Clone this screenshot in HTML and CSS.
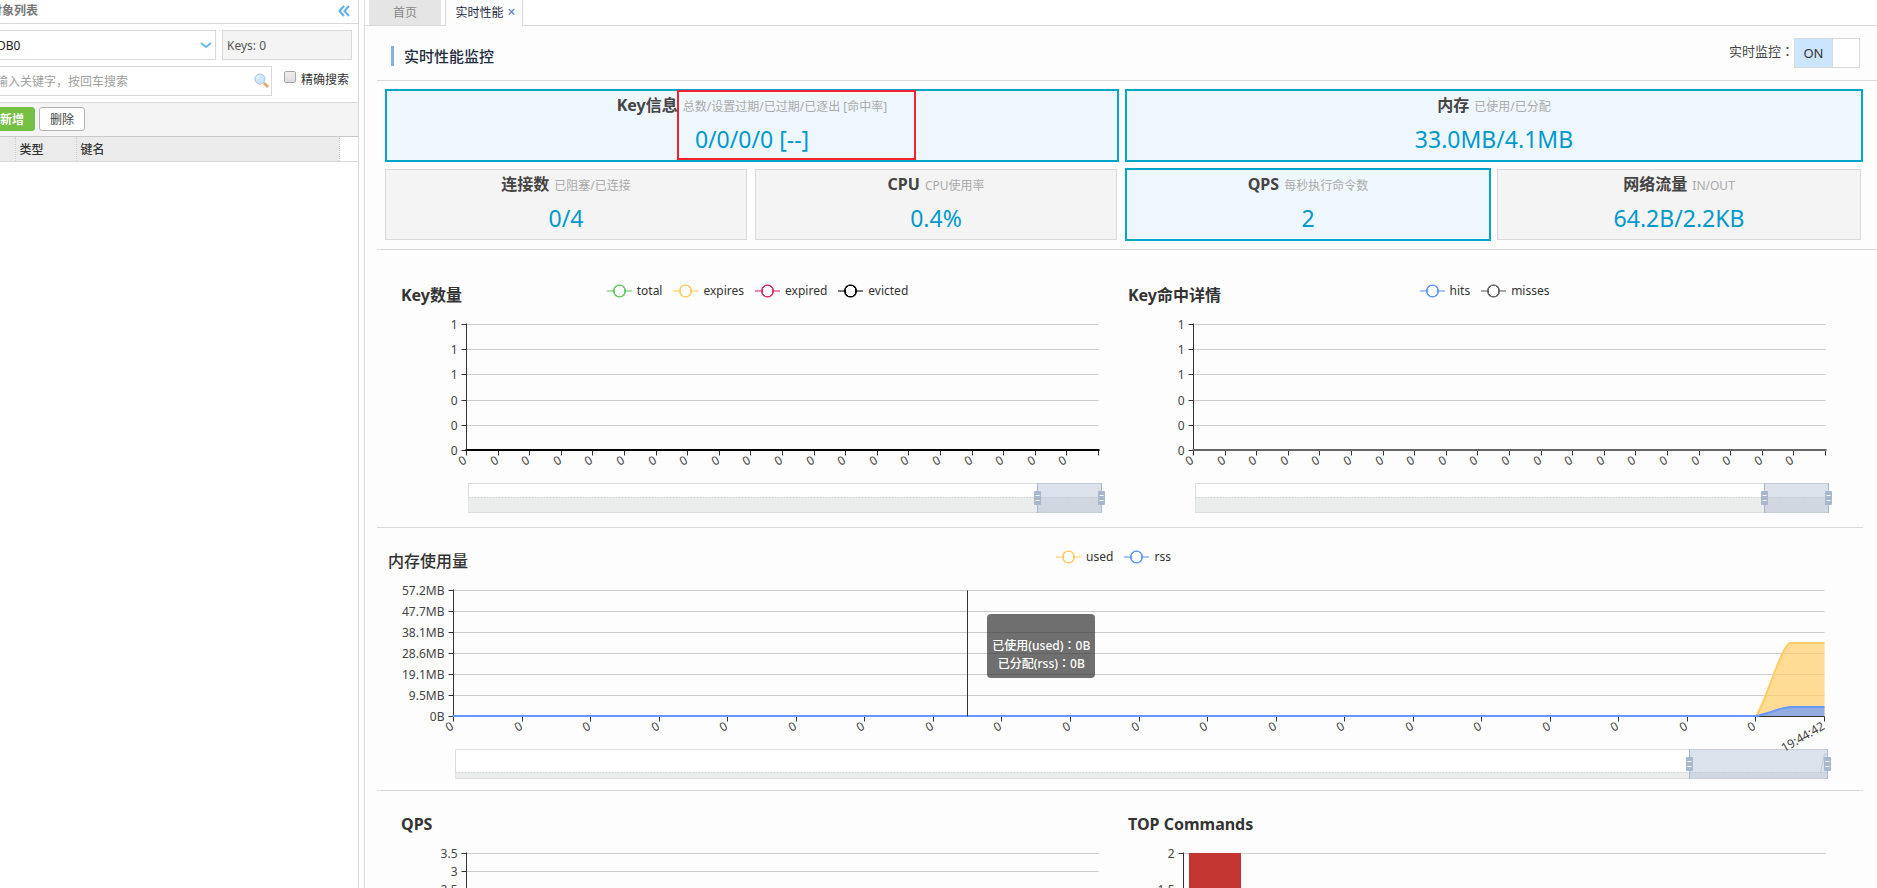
FILE: index.html
```html
<!DOCTYPE html>
<html lang="zh-CN">
<head>
<meta charset="utf-8">
<title>实时性能监控</title>
<link rel="stylesheet" href="styles.css">
</head>
<body>
<div class="app">
  <aside class="sidebar">
    <div class="side-inner">
      <header class="side-head">
        <h2 class="side-title">对象列表</h2>
        <button class="collapse" type="button" aria-label="收起">
          <svg width="12" height="12" viewBox="0 0 12 12"><path d="M6 1L1.500 6 6 11M11 1L6.500 6 11 11"/></svg>
        </button>
      </header>
      <div class="filters">
        <div class="filter-row">
          <div class="select-wrap">
            <select class="db-select" aria-label="数据库"><option>DB0</option></select>
            <svg class="select-arrow" width="12" height="8" viewBox="0 0 12 8"><path d="M1 1l5 4 5-4"/></svg>
          </div>
          <div class="keys">Keys: 0</div>
        </div>
        <div class="filter-row">
          <div class="search-wrap">
            <input class="search" type="text" placeholder="请输入关键字，按回车搜索" aria-label="关键字">
            <svg class="search-icon" width="16" height="16" viewBox="0 0 16 16">
              <path class="handle" d="M10 10l4 4"/><circle class="lens" cx="6" cy="6" r="5"/><path class="shine" d="M3 5.500a3 3 0 0 1 3-2.500"/>
            </svg>
          </div>
          <label class="exact"><input class="tick" type="checkbox">精确搜索</label>
        </div>
      </div>
      <div class="toolbar">
        <button class="btn btn-add" type="button">新增</button>
        <button class="btn" type="button">删除</button>
      </div>
      <table class="key-table">
        <thead><tr><th class="col-check"></th><th class="col-type">类型</th><th>键名</th><th class="col-end"></th></tr></thead>
      </table>
    </div>
  </aside>

  <main class="main">
    <nav class="tabs">
      <a class="tab" href="#home">首页</a>
      <a class="tab tab-active" href="#perf">实时性能<span class="tab-close">×</span></a>
    </nav>
    <div class="content">
      <header class="page-head">
        <h1 class="page-title">实时性能监控</h1>
        <div class="monitor">
          <span>实时监控<span class="colon" lang="zh-TW">：</span></span>
          <button class="switch" type="button" aria-label="实时监控"><span class="switch-on">ON</span><span class="switch-knob"></span></button>
        </div>
      </header>

      <section class="cards">
        <div class="card-group">
          <article class="card card-hot card-key">
            <h3 class="card-title">Key信息 <small>总数/设置过期/已过期/已逐出 [命中率]</small></h3>
            <p class="card-value">0/0/0/0 [--]</p>
            <span class="callout"></span>
          </article>
          <div class="card-row">
            <article class="card">
              <h3 class="card-title">连接数 <small>已阻塞/已连接</small></h3>
              <p class="card-value">0/4</p>
            </article>
            <article class="card">
              <h3 class="card-title">CPU <small>CPU使用率</small></h3>
              <p class="card-value">0.4%</p>
            </article>
          </div>
        </div>
        <div class="card-group card-group-right">
          <article class="card card-hot">
            <h3 class="card-title">内存 <small>已使用/已分配</small></h3>
            <p class="card-value">33.0MB/4.1MB</p>
          </article>
          <div class="card-row card-row-right">
            <article class="card card-hot">
              <h3 class="card-title">QPS <small>每秒执行命令数</small></h3>
              <p class="card-value">2</p>
            </article>
            <article class="card">
              <h3 class="card-title">网络流量 <small>IN/OUT</small></h3>
              <p class="card-value">64.2B/2.2KB</p>
            </article>
          </div>
        </div>
      </section>

      <section class="band band-first">
        <figure class="chart">
          <figcaption class="chart-head">
            <h2 class="chart-title">Key数量</h2>
            <ul class="legend">
              <li class="legend-item total">total</li>
              <li class="legend-item expires">expires</li>
              <li class="legend-item expired">expired</li>
              <li class="legend-item evicted">evicted</li>
            </ul>
          </figcaption>
          <div class="plot" data-chart="keys"></div>
        </figure>
        <figure class="chart">
          <figcaption class="chart-head">
            <h2 class="chart-title">Key命中详情</h2>
            <ul class="legend">
              <li class="legend-item hits">hits</li>
              <li class="legend-item misses">misses</li>
            </ul>
          </figcaption>
          <div class="plot" data-chart="hits"></div>
        </figure>
      </section>

      <section class="band band-memory">
        <figure class="chart">
          <figcaption class="chart-head">
            <h2 class="chart-title">内存使用量</h2>
            <ul class="legend">
              <li class="legend-item expires">used</li>
              <li class="legend-item hits">rss</li>
            </ul>
          </figcaption>
          <div class="plot" data-chart="memory"></div>
          <div class="tip"><br>已使用(used)<span class="colon" lang="zh-TW">：</span>0B<br>已分配(rss)<span class="colon" lang="zh-TW">：</span>0B</div>
        </figure>
      </section>

      <section class="band">
        <figure class="chart">
          <figcaption class="chart-head"><h2 class="chart-title">QPS</h2></figcaption>
          <div class="plot" data-chart="qps"></div>
        </figure>
        <figure class="chart">
          <figcaption class="chart-head"><h2 class="chart-title">TOP Commands</h2></figcaption>
          <div class="plot" data-chart="commands"></div>
        </figure>
      </section>
    </div>
  </main>
</div>
<script src="charts.js"></script>
</body>
</html>
```
FILE: styles.css
```css
* { box-sizing: border-box; }

body {
  margin: 0;
  font: 12px/18px "Noto Sans", "Noto Sans CJK SC", sans-serif;
  color: #444;
  background: #fff;
}

h1, h2, h3, p, ul, figure { margin: 0; padding: 0; }
button, input, select { font: inherit; color: inherit; }
svg { display: block; fill: none; }

.colon { font-family: "Noto Sans CJK TC", sans-serif; line-height: 12px; }

.app { display: flex; height: 100vh; overflow: hidden; }

/* Sidebar */
.sidebar { flex: none; width: 359px; overflow: hidden; border-right: 1px solid #d9d9d9; }
.side-inner { margin-left: -20px; }
.side-head {
  display: flex; align-items: center; justify-content: space-between;
  height: 24px; padding: 0 8px 2px 10px; border-bottom: 1px solid #d9d9d9;
}
.side-title { font-size: 12px; line-height: 18px; font-weight: 700; color: #777; }
.collapse { padding: 0; border: 0; background: none; }
.collapse path { stroke: #5fb0ea; stroke-width: 2; }
.filters { display: flex; flex-direction: column; gap: 6px; padding: 6px 6px 6px 0; }
.filter-row { display: flex; gap: 6px; height: 30px; }
.select-wrap { position: relative; width: 236px; }
.db-select {
  appearance: none; width: 100%; height: 30px; padding: 1px 16px 0;
  border: 1px solid #d9d9d9; border-radius: 0; background: #fff; color: #222;
}
.select-arrow { position: absolute; right: 4px; top: 12px; stroke: #6cb5ec; stroke-width: 2; }
.keys { flex: 1; padding: 6px 4px; border: 1px solid #d9d9d9; background: #f4f4f4; color: #555; }
.search-wrap { position: relative; width: 292px; }
.search { width: 100%; height: 30px; padding: 1px 3px 0; border: 1px solid #d9d9d9; background: #fff; }
.search::placeholder { color: #a0a0a0; opacity: 1; }
.search-icon { position: absolute; right: 2px; top: 7px; }
.handle { stroke: #e8a96a; stroke-width: 3; }
.lens { fill: #cfe6fb; stroke: #a9c4e4; stroke-width: 1; }
.shine { stroke: #fff; stroke-width: 1; }
.exact { display: flex; gap: 5px; padding: 5px 0 0 6px; color: #333; }
.tick {
  appearance: none; width: 12px; height: 12px; margin: 0; border: 1px solid #a8a8a8;
  border-radius: 2px; background: linear-gradient(#eee, #ddd);
}
.toolbar {
  display: flex; align-items: flex-start; gap: 4px; height: 35px; padding: 4px 0;
  border-top: 1px solid #d9d9d9; border-bottom: 1px solid #c9c9c9; background: #f4f4f4;
}
.btn { height: 24px; padding: 1px 10px 0; border: 1px solid #b4b4b4; border-radius: 3px; background: #fff; }
.btn-add { width: 55px; padding: 1px 10px 0 19px; border-color: #75c043; background: #75c043; color: #fff; font-weight: 700; }
.key-table { width: 100%; border-collapse: collapse; table-layout: fixed; border-bottom: 1px solid #d9d9d9; }
.key-table th {
  height: 24px; padding: 2px 4px 0; text-align: left; font-weight: 500; color: #333;
  background: #ebebeb; border-right: 1px dotted #ccc;
}
.key-table .col-check { width: 35px; }
.key-table .col-type { width: 61px; }
.key-table .col-end { width: 19px; background: #fff; border-right: 0; }

/* Main panel */
.main { flex: 1; min-width: 0; margin-left: 5px; border-left: 1px solid #d9d9d9; background: #fdfdfd; }
.tabs { display: flex; gap: 4px; height: 26px; padding-left: 4px; border-bottom: 1px solid #d9d9d9; background: #fff; }
.tab { width: 72px; height: 25px; padding-top: 4px; text-align: center; text-decoration: none; color: #888; background: #e5e5e5; }
.tab-active {
  width: 78px; height: 26px; padding-left: 3px; color: #1f2a44; background: #fdfdfd;
  border: 1px solid #d9d9d9; border-width: 0 1px;
}
.tab-close { margin-left: 4px; font-size: 14px; line-height: 12px; color: #4a78c2; }
.content { padding-left: 12px; }

.page-head {
  display: flex; align-items: center; justify-content: space-between;
  height: 55px; padding: 6px 17px 6px 14px; border-bottom: 1px solid #d9d9d9;
}
.page-title { margin-top: 6px; padding-left: 10px; border-left: 3px solid #82b4e0; font-size: 15px; line-height: 20px; font-weight: 500; color: #1d2b3d; }
.monitor { display: flex; align-items: flex-start; font-size: 13px; }
.monitor > span { padding-top: 4px; }
.switch { display: flex; align-self: center; width: 66px; height: 30px; padding: 0; border: 1px solid #d9d9d9; background: #fff; }
.switch-on { width: 38px; height: 28px; line-height: 28px; text-align: center; background: #cce5ff; border-right: 1px solid #d9d9d9; color: #333; }

.cards { display: flex; gap: 6px; padding: 8px 14px 8px 8px; border-bottom: 1px solid #d9d9d9; }
.card-group { flex: 734; display: flex; flex-direction: column; gap: 6px; min-width: 0; }
.card-group-right { flex: 738; }
.card-row { display: flex; gap: 8px; padding-right: 2px; }
.card-row-right { gap: 6px; }
.card { flex: 1; margin: 1px 0; padding: 2px 0 8px; border: 1px solid #d9d9d9; background: #f4f4f4; text-align: center; }
.card-hot { position: relative; margin: 0; border: 2px solid #00a5c9; background: #eff7fe; }
.card-title { font-size: 16px; line-height: 24px; font-weight: 700; color: #444; }
.card-title small { margin-left: 1px; font-size: 12px; line-height: 12px; font-weight: 400; color: #aaa; }
.card-value { padding-top: 9px; font-size: 23px; line-height: 26px; color: #09c; }
.callout { position: absolute; left: calc(50% - 75px); top: -1px; width: 239px; height: 70px; border: 2px solid #f5222d; }

/* Charts */
.band { display: flex; margin-right: 14px; padding: 13px 15px 0 17px; }
.band + .band { border-top: 1px solid #d9d9d9; }
.band-first { padding-top: 25px; padding-bottom: 12px; }
.band-memory { padding: 13px 16px 9px 3px; }
.chart { position: relative; flex: 1; min-width: 0; }
.chart-head { display: grid; grid-template-columns: 1fr auto 1fr; align-items: center; height: 40px; padding-right: 8px; }
.chart-title { padding-left: 7px; font-size: 16px; line-height: 24px; font-weight: 700; color: #333; white-space: nowrap; }
.band-memory .chart-title { padding-left: 8px; font-weight: 500; }
.legend { display: flex; gap: 11px; padding: 0 0 8px 8px; list-style: none; }
.legend-item { display: flex; align-items: center; gap: 5px; color: #333; }
.legend-item::before {
  content: ""; width: 25px; height: 14px;
  background:
    radial-gradient(circle at 50% 50%, #fff 5px, var(--c) 5px, var(--c) 6px, transparent 7px),
    linear-gradient(var(--soft), var(--soft)) 0 6px / 25px 2px no-repeat;
}
.total { --c: #66cc66; --soft: #a6e2a6; }
.expires { --c: #ffcc66; --soft: #ffe2a6; }
.expired { --c: #d6336c; --soft: #e88aa8; }
.evicted { --c: #000; --soft: #777; }
.hits { --c: #6699ff; --soft: #a9c5ff; }
.misses { --c: #666; --soft: #aaa; }

.plot svg { width: 100%; height: 200px; }
.plot text { font-size: 12px; fill: #444; }
.grid-line { stroke: #ccc; }
.axis { stroke: #333; }
.series { stroke-width: 2; }
.slider-box { fill: #fff; stroke: #ddd; }
.slider-shadow { fill: #ebeded; }
.slider-line { stroke: #ccd0d3; stroke-dasharray: 2 1; }
.slider-window { fill: #a7b7cc; fill-opacity: 0.4; }
.slider-edge { stroke: #a7b7cc; }
.slider-handle { fill: #a7b7cc; }
.slider-grip { stroke: #fff; }

.tip {
  position: absolute; left: 41.4%; top: 73px; padding: 5px; border-radius: 4px;
  background: rgba(50, 50, 50, 0.7); color: #fff; font-weight: 500; text-align: center; white-space: nowrap;
}
```
FILE: charts.js
```javascript
const TOP = 9.5;
const BASE = 135.5;

const charts = {
  keys: { left: 72.5, right: 22, labels: ["1", "1", "1", "0", "0", "0"], ticks: 20, flat: "#000", slider: 183 },
  hits: { left: 72.5, right: 22, labels: ["1", "1", "1", "0", "0", "0"], ticks: 20, flat: "#666", slider: 183 },
  memory: {
    left: 73.5, right: 22, ticks: 20, slider: 192, last: "19:44:42", memory: true,
    labels: ["57.2MB", "47.7MB", "38.1MB", "28.6MB", "19.1MB", "9.5MB", "0B"]
  },
  qps: { left: 72.5, right: 22, labels: ["3.5", "3", "2.5", "2", "1.5", "1", "0.5", "0"] },
  commands: { left: 62.5, right: 22, labels: ["2", "1.5", "1", "0.5"], step: 36, bar: true }
};

const line = (x1, y1, x2, y2, cls, extra = "") =>
  `<line x1="${x1}" y1="${y1}" x2="${x2}" y2="${y2}" class="${cls}" ${extra}/>`;

function handle(x) {
  return line(x, 168, x, 198, "slider-edge") +
    `<rect class="slider-handle" x="${x - 3.5}" y="176" width="7" height="14" rx="1"/>` +
    line(x - 2, 180.5, x + 2, 180.5, "slider-grip") + line(x - 2, 185.5, x + 2, 185.5, "slider-grip");
}

function draw(el) {
  const c = charts[el.dataset.chart];
  const l = c.left;
  const r = Math.round(el.clientWidth - c.right) - 0.5;
  const step = c.step || (BASE - TOP) / (c.labels.length - 1);
  let out = "";

  c.labels.forEach((label, i) => {
    const y = Math.floor(TOP + i * step) + 0.5;
    out += line(l, y, r, y, "grid-line") + line(l - 5, y, l, y, "axis");
    out += `<text x="${l - 9}" y="${y + 4.5}" text-anchor="end">${label}</text>`;
  });

  if (c.bar) out += `<rect x="68" y="9" width="52" height="145" fill="#c23531"/>`;
  out += line(l, TOP - 1, l, c.ticks ? BASE : 200, "axis");

  if (c.ticks) {
    const sr = r + 3;
    const sl = l + 2;
    const wx = Math.round(sl + (sr - sl) * 0.9) - 0.5;
    out += `<rect class="slider-box" x="${sl}" y="168.5" width="${sr - sl}" height="29"/>`;
    out += `<rect class="slider-shadow" x="${sl}" y="${c.slider}" width="${sr - sl}" height="${197 - c.slider}"/>`;
    out += line(sl, c.slider - 0.5, sr, c.slider - 0.5, "slider-line");
    if (c.memory) out += `<path d="M${sr - 7} 191.5L${sr - 3} 173h3" stroke="#ccd0d3"/>`;
    out += `<rect class="slider-window" x="${wx}" y="168" width="${sr - wx}" height="30"/>`;
    out += handle(wx) + handle(sr);

    out += line(l, BASE, r, BASE, "axis");
    for (let i = 0; i <= c.ticks; i++) {
      const x = Math.floor(l + (r - l) * i / c.ticks) + 0.5;
      out += line(x, BASE, x, BASE + 5, "axis");
      const label = i < c.ticks ? "0" : c.last;
      if (label) out += `<text transform="translate(${x + 1} ${BASE + 12}) rotate(-30)" text-anchor="end">${label}</text>`;
    }
    if (c.flat) out += line(l - 1, 135, r + 1, 135, "series", `stroke="${c.flat}"`);
  }

  if (c.memory) {
    const s = r - (r - l) / c.ticks;
    const m = (s + r) / 2;
    const used = `M${s} 135C${s + 8} 126 ${m - 8} 62 ${m} 62H${r}`;
    const rss = `M${s} 135C${s + 12} 133 ${m - 8} 126 ${m} 126H${r}`;
    out += `<path d="${used}V135Z" fill="#fc6" fill-opacity="0.7"/><path d="${rss}V135Z" fill="#69f" fill-opacity="0.7"/>`;
    out += `<path d="${used}" class="series" stroke="#fc6"/><path d="${rss}" class="series" stroke="#69f"/>`;
    out += line(l - 1, 135, s, 135, "series", `stroke="#69f"`);
    const px = Math.round(l + (r - l) * 0.375) - 0.5;
    out += line(px, TOP, px, BASE, "axis");
  }
  el.innerHTML = `<svg>${out}</svg>`;
}

function drawAll() {
  document.querySelectorAll(".plot").forEach(draw);
}

window.addEventListener("resize", drawAll);
drawAll();
```
